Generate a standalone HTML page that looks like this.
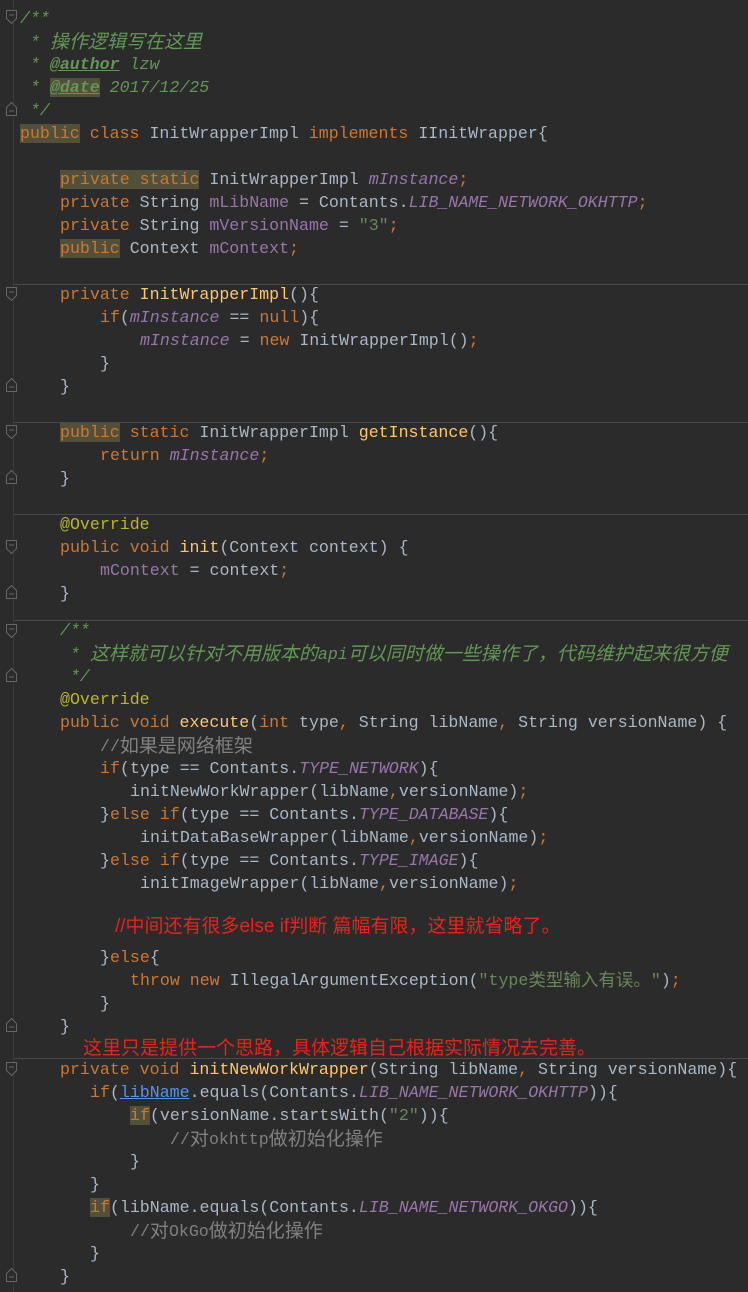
<!DOCTYPE html>
<html><head><meta charset="utf-8"><style>
body{margin:0;width:748px;height:1292px;background:#2b2b2b;overflow:hidden;position:relative;font-family:"Liberation Mono","Noto Sans CJK SC",monospace;font-size:16.6px;color:#a9b7c6}
.l{position:absolute;white-space:pre;height:23px;line-height:23px}
.z{font-size:19px;font-family:"Noto Sans CJK SC",sans-serif;line-height:1;position:relative;top:1px}
.k{color:#cc7832}.f{color:#9876aa}.fi{color:#9876aa;font-style:italic}.m{color:#ffc66d}.s{color:#6a8759}.c{color:#808080}.d{color:#629755;font-style:italic}.a{color:#bbb529}
.hk{background:#52503a}
.sep{position:absolute;left:14px;right:0;height:1px;background:#4a4a4a}
.red{position:absolute;color:#e8231c;font-family:"Liberation Sans","Noto Sans CJK SC",sans-serif;font-size:19px;white-space:pre}
.g{position:absolute;left:13px;top:0;width:1px;height:1292px;background:#3a3a3a}
.fm{position:absolute;left:6px;width:11px;height:14px}
</style></head><body>
<div class="g"></div>
<div class="sep" style="top:284px"></div>
<div class="sep" style="top:422px"></div>
<div class="sep" style="top:514px"></div>
<div class="sep" style="top:620px"></div>
<div class="sep" style="top:1058px"></div>
<svg class="fm" style="top:10px" viewBox="0 0 11 14"><path d="M.5 .5h10v8l-5 5-5-5z" fill="#2b2b2b" stroke="#666"/><path d="M3 5h5" stroke="#666"/></svg>
<svg class="fm" style="top:102px" viewBox="0 0 11 14"><path d="M.5 13.5h10v-8l-5-5-5 5z" fill="#2b2b2b" stroke="#666"/><path d="M3 9h5" stroke="#666"/></svg>
<svg class="fm" style="top:287px" viewBox="0 0 11 14"><path d="M.5 .5h10v8l-5 5-5-5z" fill="#2b2b2b" stroke="#666"/><path d="M3 5h5" stroke="#666"/></svg>
<svg class="fm" style="top:378px" viewBox="0 0 11 14"><path d="M.5 13.5h10v-8l-5-5-5 5z" fill="#2b2b2b" stroke="#666"/><path d="M3 9h5" stroke="#666"/></svg>
<svg class="fm" style="top:425px" viewBox="0 0 11 14"><path d="M.5 .5h10v8l-5 5-5-5z" fill="#2b2b2b" stroke="#666"/><path d="M3 5h5" stroke="#666"/></svg>
<svg class="fm" style="top:470px" viewBox="0 0 11 14"><path d="M.5 13.5h10v-8l-5-5-5 5z" fill="#2b2b2b" stroke="#666"/><path d="M3 9h5" stroke="#666"/></svg>
<svg class="fm" style="top:540px" viewBox="0 0 11 14"><path d="M.5 .5h10v8l-5 5-5-5z" fill="#2b2b2b" stroke="#666"/><path d="M3 5h5" stroke="#666"/></svg>
<svg class="fm" style="top:585px" viewBox="0 0 11 14"><path d="M.5 13.5h10v-8l-5-5-5 5z" fill="#2b2b2b" stroke="#666"/><path d="M3 9h5" stroke="#666"/></svg>
<svg class="fm" style="top:624px" viewBox="0 0 11 14"><path d="M.5 .5h10v8l-5 5-5-5z" fill="#2b2b2b" stroke="#666"/><path d="M3 5h5" stroke="#666"/></svg>
<svg class="fm" style="top:668px" viewBox="0 0 11 14"><path d="M.5 13.5h10v-8l-5-5-5 5z" fill="#2b2b2b" stroke="#666"/><path d="M3 9h5" stroke="#666"/></svg>
<svg class="fm" style="top:1018px" viewBox="0 0 11 14"><path d="M.5 13.5h10v-8l-5-5-5 5z" fill="#2b2b2b" stroke="#666"/><path d="M3 9h5" stroke="#666"/></svg>
<svg class="fm" style="top:1062px" viewBox="0 0 11 14"><path d="M.5 .5h10v8l-5 5-5-5z" fill="#2b2b2b" stroke="#666"/><path d="M3 5h5" stroke="#666"/></svg>
<svg class="fm" style="top:1268px" viewBox="0 0 11 14"><path d="M.5 13.5h10v-8l-5-5-5 5z" fill="#2b2b2b" stroke="#666"/><path d="M3 9h5" stroke="#666"/></svg>

<div class="l d" style="top:7px;left:20px">/**</div>
<div class="l d" style="top:30px;left:20px"> * <span class="z">操作逻辑写在这里</span></div>
<div class="l d" style="top:53px;left:20px"> * <b style="text-decoration:underline">@author</b> lzw</div>
<div class="l d" style="top:76px;left:20px"> * <b class="hk" style="text-decoration:underline">@date</b> 2017/12/25</div>
<div class="l d" style="top:99px;left:20px"> */</div>
<div class="l" style="top:122px;left:20px"><span class="k hk">public</span><span class="k"> class </span>InitWrapperImpl <span class="k">implements </span>IInitWrapper{</div>
<div class="l" style="top:168px;left:60px"><span class="k hk">private static</span> InitWrapperImpl <span class="fi">mInstance</span><span class="k">;</span></div>
<div class="l" style="top:191px;left:60px"><span class="k">private </span>String <span class="f">mLibName</span> = Contants.<span class="fi">LIB_NAME_NETWORK_OKHTTP</span><span class="k">;</span></div>
<div class="l" style="top:214px;left:60px"><span class="k">private </span>String <span class="f">mVersionName</span> = <span class="s">"3"</span><span class="k">;</span></div>
<div class="l" style="top:237px;left:60px"><span class="k hk">public</span> Context <span class="f">mContext</span><span class="k">;</span></div>
<div class="l" style="top:283px;left:60px"><span class="k">private </span><span class="m">InitWrapperImpl</span>(){</div>
<div class="l" style="top:306px;left:100px"><span class="k">if</span>(<span class="fi">mInstance</span> == <span class="k">null</span>){</div>
<div class="l" style="top:329px;left:140px"><span class="fi">mInstance</span> = <span class="k">new </span>InitWrapperImpl()<span class="k">;</span></div>
<div class="l" style="top:352px;left:100px">}</div>
<div class="l" style="top:375px;left:60px">}</div>
<div class="l" style="top:421px;left:60px"><span class="k hk">public</span><span class="k"> static </span>InitWrapperImpl <span class="m">getInstance</span>(){</div>
<div class="l" style="top:444px;left:100px"><span class="k">return </span><span class="fi">mInstance</span><span class="k">;</span></div>
<div class="l" style="top:467px;left:60px">}</div>
<div class="l a" style="top:513px;left:60px">@Override</div>
<div class="l" style="top:536px;left:60px"><span class="k">public void </span><span class="m">init</span>(Context context) {</div>
<div class="l" style="top:559px;left:100px"><span class="f">mContext</span> = context<span class="k">;</span></div>
<div class="l" style="top:582px;left:60px">}</div>
<div class="l d" style="top:619px;left:60px">/**</div>
<div class="l d" style="top:642px;left:60px"> * <span class="z">这样就可以针对不用版本的</span>api<span class="z">可以同时做一些操作了，代码维护起来很方便</span></div>
<div class="l d" style="top:665px;left:60px"> */</div>
<div class="l a" style="top:688px;left:60px">@Override</div>
<div class="l" style="top:711px;left:60px"><span class="k">public void </span><span class="m">execute</span>(<span class="k">int </span>type<span class="k">, </span>String libName<span class="k">, </span>String versionName) {</div>
<div class="l c" style="top:734px;left:100px">//<span class="z">如果是网络框架</span></div>
<div class="l" style="top:757px;left:100px"><span class="k">if</span>(type == Contants.<span class="fi">TYPE_NETWORK</span>){</div>
<div class="l" style="top:780px;left:130px">initNewWorkWrapper(libName<span class="k">,</span>versionName)<span class="k">;</span></div>
<div class="l" style="top:803px;left:100px">}<span class="k">else if</span>(type == Contants.<span class="fi">TYPE_DATABASE</span>){</div>
<div class="l" style="top:826px;left:140px">initDataBaseWrapper(libName<span class="k">,</span>versionName)<span class="k">;</span></div>
<div class="l" style="top:849px;left:100px">}<span class="k">else if</span>(type == Contants.<span class="fi">TYPE_IMAGE</span>){</div>
<div class="l" style="top:872px;left:140px">initImageWrapper(libName<span class="k">,</span>versionName)<span class="k">;</span></div>
<div class="red" style="top:911px;left:115px">//中间还有很多else if判断 篇幅有限，这里就省略了。</div>
<div class="l" style="top:946px;left:100px">}<span class="k">else</span>{</div>
<div class="l" style="top:969px;left:130px"><span class="k">throw new </span>IllegalArgumentException(<span class="s">"type<span class="z" style="font-size:17.5px">类型输入有误。</span>"</span>)<span class="k">;</span></div>
<div class="l" style="top:992px;left:100px">}</div>
<div class="l" style="top:1015px;left:60px">}</div>
<div class="red" style="top:1033px;left:83px">这里只是提供一个思路，具体逻辑自己根据实际情况去完善。</div>
<div class="l" style="top:1058px;left:60px"><span class="k">private void </span><span class="m">initNewWorkWrapper</span>(String libName<span class="k">, </span>String versionName){</div>
<div class="l" style="top:1081px;left:90px"><span class="k">if</span>(<span style="color:#5394ec;text-decoration:underline">libName</span>.equals(Contants.<span class="fi">LIB_NAME_NETWORK_OKHTTP</span>)){</div>
<div class="l" style="top:1104px;left:130px"><span class="k hk">if</span>(versionName.startsWith(<span class="s">"2"</span>)){</div>
<div class="l c" style="top:1127px;left:170px">//<span class="z">对</span>okhttp<span class="z">做初始化操作</span></div>
<div class="l" style="top:1150px;left:130px">}</div>
<div class="l" style="top:1173px;left:90px">}</div>
<div class="l" style="top:1196px;left:90px"><span class="k hk">if</span>(libName.equals(Contants.<span class="fi">LIB_NAME_NETWORK_OKGO</span>)){</div>
<div class="l c" style="top:1219px;left:130px">//<span class="z">对</span>OkGo<span class="z">做初始化操作</span></div>
<div class="l" style="top:1242px;left:90px">}</div>
<div class="l" style="top:1265px;left:60px">}</div>
</body></html>
